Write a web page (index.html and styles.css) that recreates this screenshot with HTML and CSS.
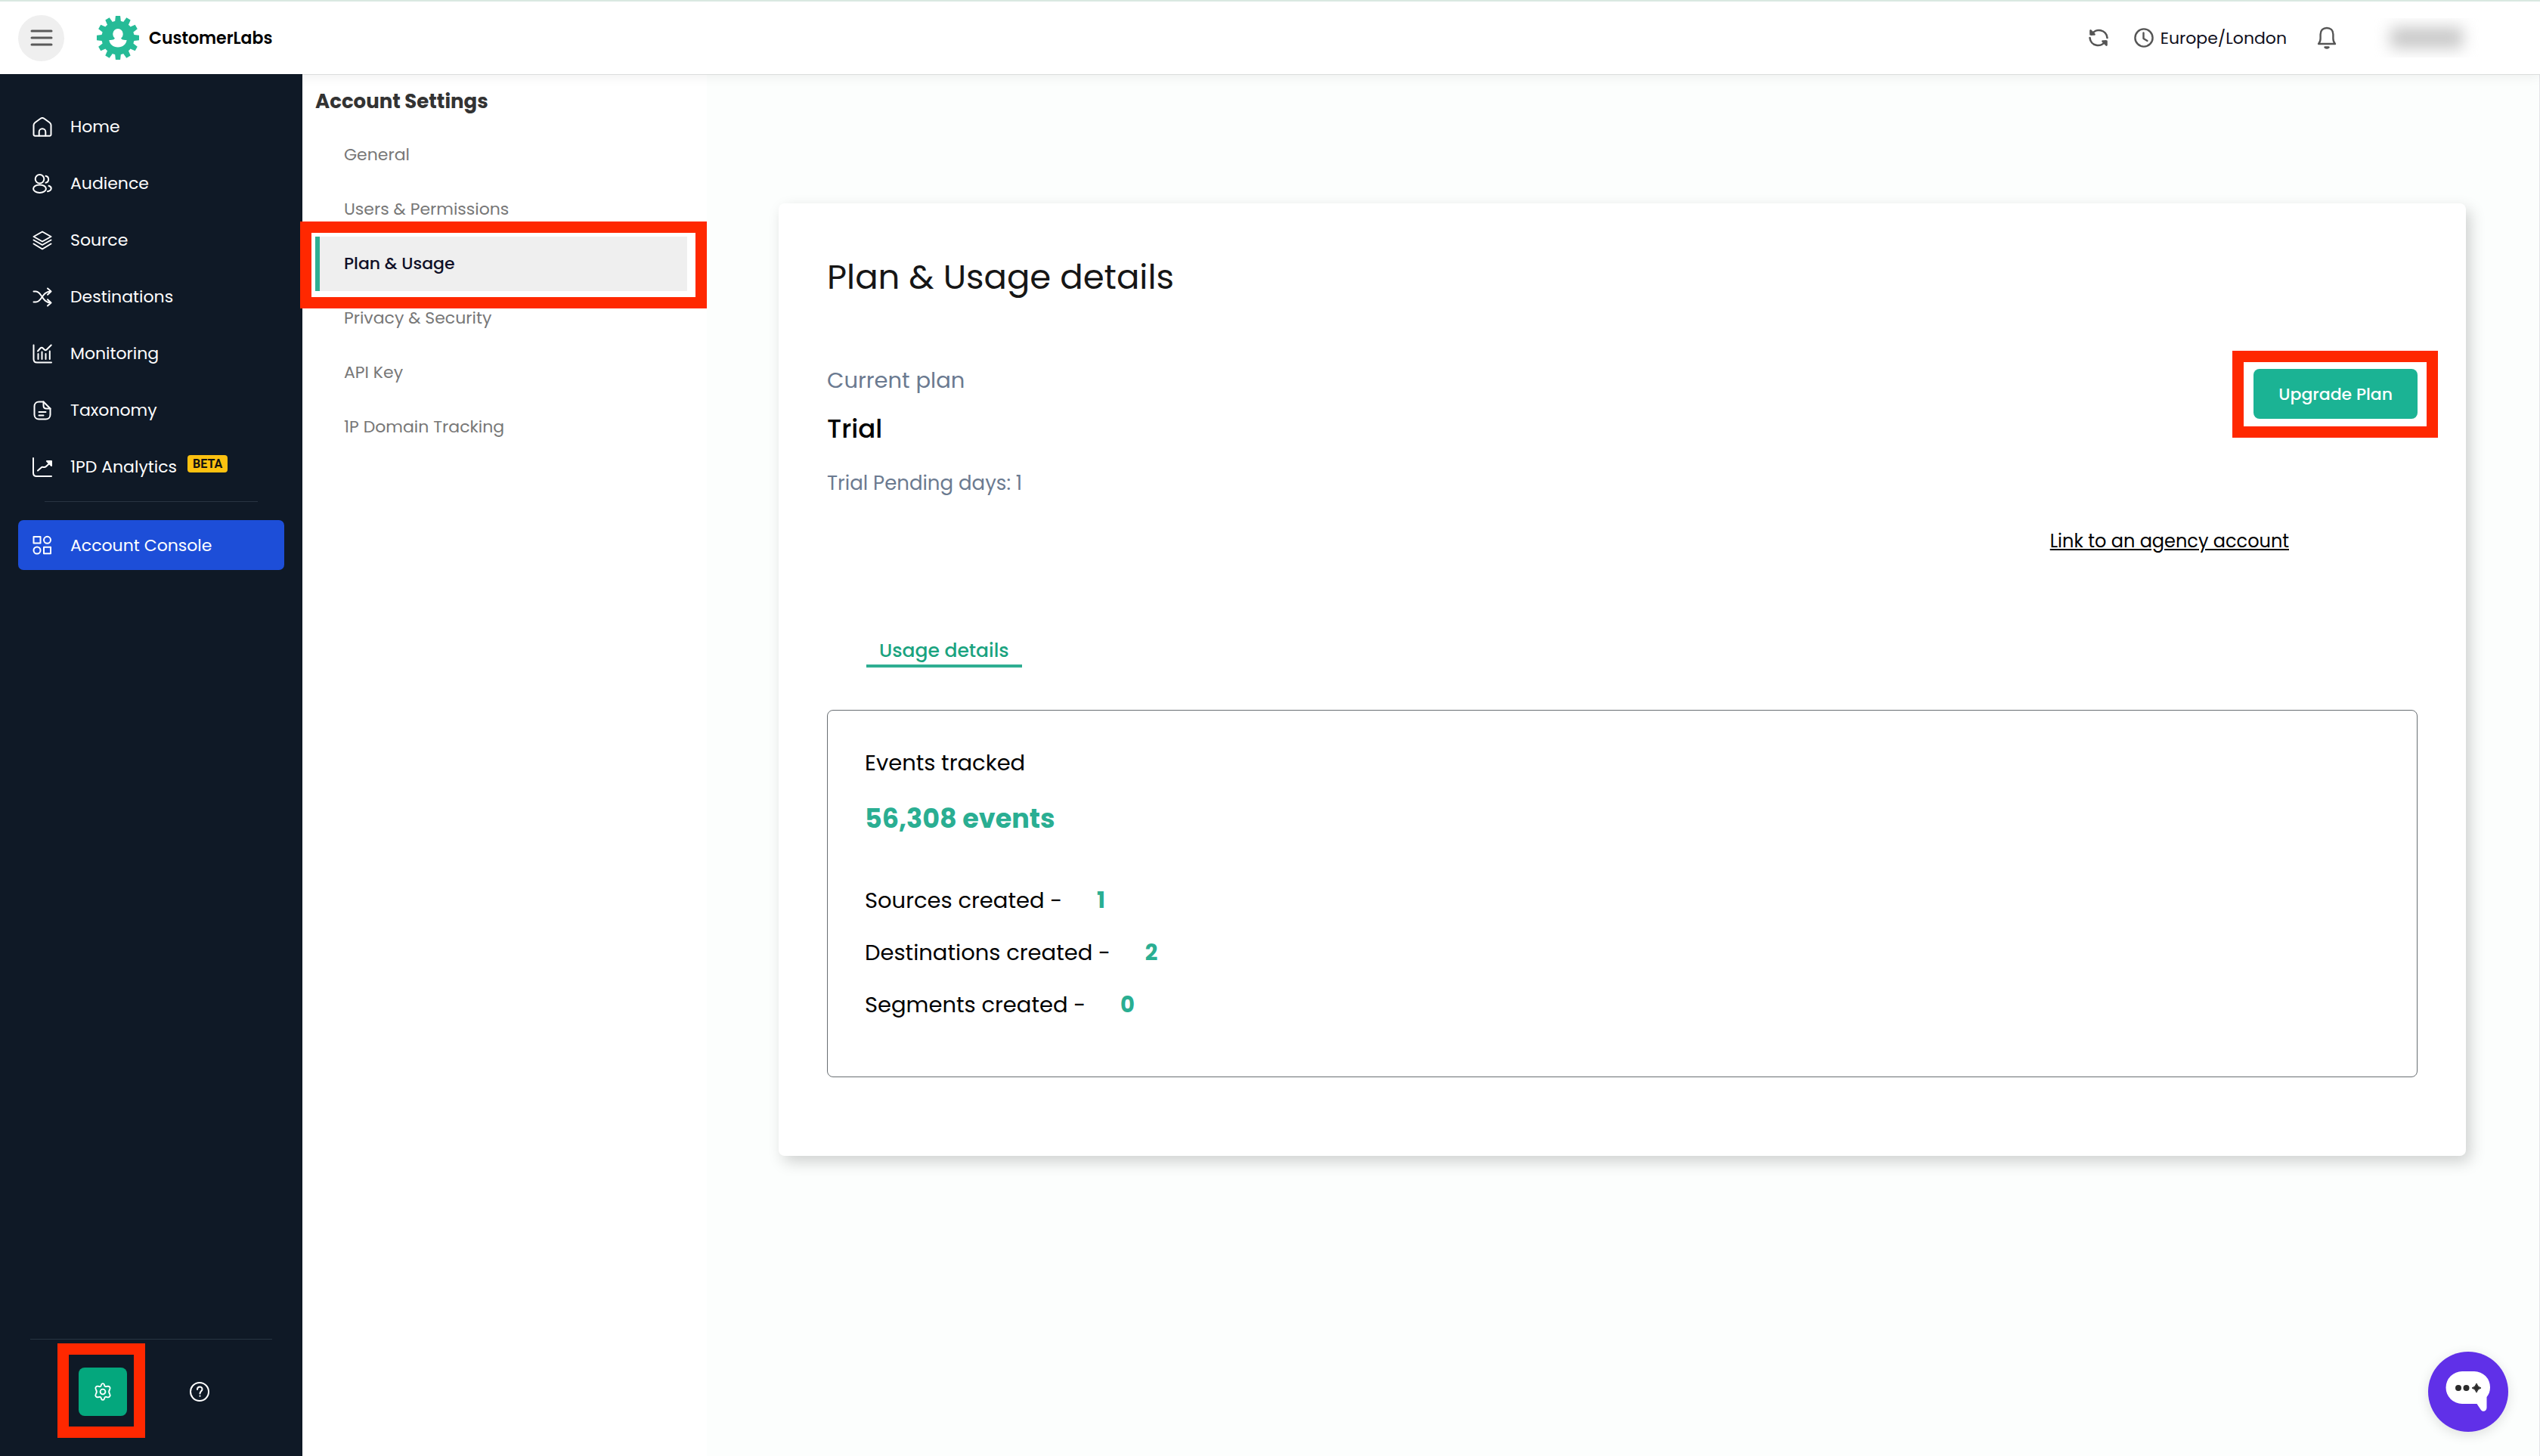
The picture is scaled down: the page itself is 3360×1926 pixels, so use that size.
FILE: index.html
```html
<!DOCTYPE html>
<html lang="en">
<head>
    <meta charset="UTF-8">
    <meta name="viewport" content="width=device-width, initial-scale=1.0">
    <title>Plan &amp; Usage - CustomerLabs</title>
    <link rel="stylesheet" href="styles.css">
</head>
<body>
    <header class="topbar">
        <button class="menu-btn" aria-label="Toggle menu">
            <svg width="30" height="24" viewBox="0 0 30 24" stroke="#5a5a5a" stroke-width="3" stroke-linecap="round">
                <path d="M2 3h26M2 12h26M2 21h26"/>
            </svg>
        </button>
        <a class="brand" href="#">
            <svg width="56" height="58" viewBox="-29 -29 58 58" preserveAspectRatio="none" fill="#26bb97">
                <defs><path id="tooth" d="M-4.200-20L-3.200-29H3.200L4.200-20Z"/></defs>
                <circle r="22.500"/>
                <use href="#tooth"/>
                <use href="#tooth" transform="rotate(30)"/>
                <use href="#tooth" transform="rotate(60)"/>
                <use href="#tooth" transform="rotate(90)"/>
                <use href="#tooth" transform="rotate(120)"/>
                <use href="#tooth" transform="rotate(150)"/>
                <use href="#tooth" transform="rotate(180)"/>
                <use href="#tooth" transform="rotate(210)"/>
                <use href="#tooth" transform="rotate(240)"/>
                <use href="#tooth" transform="rotate(270)"/>
                <use href="#tooth" transform="rotate(300)"/>
                <use href="#tooth" transform="rotate(330)"/>
                <circle cy="-5" r="7" fill="#fff"/>
                <path fill="#fff" d="M-4-1H4C4 2 6 3 12 3C11.500 8.500 6.500 12.500 0 12.500S-11.500 8.500-12 3C-6 3-4 2-4-1Z"/>
            </svg>
            <span>CustomerLabs</span>
        </a>
        <div class="tools">
            <button class="tool" aria-label="Refresh">
                <svg width="26" height="28" viewBox="0 0 26 28" fill="none" stroke="#555" stroke-width="2.600" stroke-linecap="round" stroke-linejoin="round">
                    <path d="M4 9.500A11 11 0 0 1 24.500 14"/>
                    <path d="M22 18.500A11 11 0 0 1 1.500 14"/>
                    <path d="M2.500 4.500v5h5z" fill="#555"/>
                    <path d="M23.500 23.500v-5h-5z" fill="#555"/>
                </svg>
            </button>
            <button class="tool timezone">
                <svg width="26" height="26" viewBox="0 0 26 26" fill="none" stroke="#555" stroke-width="2.400" stroke-linecap="round" stroke-linejoin="round">
                    <circle cx="13" cy="13" r="11.600"/>
                    <path d="M12.500 6.500V14l5 3"/>
                </svg>
                <span>Europe/London</span>
            </button>
            <button class="tool bell" aria-label="Notifications">
                <svg width="26" height="30" viewBox="0 0 26 30" fill="none" stroke="#555" stroke-width="2.400" stroke-linecap="round" stroke-linejoin="round">
                    <path d="M2 23h22c-2-2-2.600-4-2.600-7v-5.500C21.400 5 18 2 13 2S4.600 5 4.600 10.500V16c0 3-.6 5-2.600 7z"/>
                    <path d="M10.500 27.500q2.500 2 5 0z" fill="#555"/>
                </svg>
            </button>
            <button class="account" aria-label="Account"></button>
        </div>
    </header>

    <div class="layout">
        <aside class="sidebar">
            <nav class="side-nav">
                <a href="#">
                    <svg class="icon" viewBox="0 0 26 26"><path d="M1.500 10.500c0-1.500.5-2.300 1.700-3.300L10 2.200c2-1.600 4-1.600 6 0l6.800 5c1.200 1 1.700 1.800 1.700 3.300V23a1.800 1.800 0 0 1-1.800 1.800H3.300A1.800 1.800 0 0 1 1.500 23z"/><path d="M8.700 24.500V19.500a4.300 4.300 0 0 1 8.600 0v5"/></svg>
                    <span>Home</span>
                </a>
                <a href="#">
                    <svg class="icon" viewBox="0 0 26 26"><circle cx="9.500" cy="6.800" r="5.800"/><ellipse cx="9.500" cy="19.700" rx="8.400" ry="5.300"/><path d="M17.500 2.800a4.600 4.600 0 0 1 0 9M21.500 15.800c4.500 1.500 4.500 6-1.500 7.400"/></svg>
                    <span>Audience</span>
                </a>
                <a href="#">
                    <svg class="icon" viewBox="0 0 26 26"><path d="M13 1.500L24.500 8 13 14.500 1.500 8z"/><path d="M1.500 12.500L13 19l11.500-6.500M1.500 17.500L13 24.500l11.500-7"/></svg>
                    <span>Source</span>
                </a>
                <a href="#">
                    <svg class="icon" viewBox="0 0 26 26"><path d="M1.500 5.500h3c8 0 8 15 19.500 15M1.500 19.500h3c8 0 8-14 19.500-14M20 1.500l4.500 4-4.500 4.300M20 16.300l4.500 4.200-4.500 4"/></svg>
                    <span>Destinations</span>
                </a>
                <a href="#">
                    <svg class="icon" viewBox="0 0 26 26"><path d="M1.500 1.500V20c0 3 1.500 4.500 4.500 4.500h19M7.500 13v7M12.500 10.500V20M17.500 13v7M22.800 9.500V20M7 9.500l3.500-4c1-1 2.200-1 3.200 0l2 2c1 1 2 1 3 0l6-6"/></svg>
                    <span>Monitoring</span>
                </a>
                <a href="#">
                    <svg class="icon" viewBox="0 0 26 26"><path d="M14.500 1.500H8.500c-3.500 0-6 2.500-6 6v11c0 3.500 2.500 6 6 6h9c3.500 0 6-2.500 6-6v-8z"/><path d="M14.500 1.500v5c0 2.500 1.500 4 4 4h5M8.500 15h9M8.500 19.500h6"/></svg>
                    <span>Taxonomy</span>
                </a>
                <a href="#">
                    <svg class="icon" viewBox="0 0 26 26"><path d="M1 1v19.500C1 23.500 2.500 25 5.500 25H25M7 17.500l4-3.500c1-1 2-1.500 3.500-1 1.500.3 2.500 0 3.500-1L24 6.500"/><path d="M19 5h6v6z" fill="currentColor"/></svg>
                    <span>1PD Analytics</span>
                    <span class="beta">BETA</span>
                </a>
            </nav>
            <hr class="divider divider-short">
            <a class="console-link" href="#">
                <svg class="icon" viewBox="0 0 26 26"><rect x="1.500" y="2" width="9" height="8.500"/><circle cx="19.500" cy="6.300" r="4.500"/><circle cx="6" cy="20" r="4.500"/><rect x="15" y="15.700" width="9" height="8.500"/></svg>
                <span>Account Console</span>
            </a>
            <div class="side-footer">
                <hr class="divider">
                <div class="footer-actions">
                    <button class="gear-btn highlight" aria-label="Settings">
                        <svg class="icon" viewBox="0 0 26 26"><circle cx="13" cy="13" r="3.700"/><path d="M10.800 3.200c.5-2.600 3.900-2.600 4.400 0 .4 2.300 1.500 3 3.700 2.200 3.200-1.200 5.800 1.700 4 4.300-1.600 2.400-1.600 4.200 0 6.600 1.800 2.600-.8 5.500-4 4.300-2.200-.8-3.300-.1-3.700 2.200-.5 2.600-3.900 2.600-4.400 0-.4-2.300-1.500-3-3.700-2.200-3.200 1.200-5.800-1.700-4-4.300 1.600-2.400 1.600-4.200 0-6.600-1.800-2.600.8-5.500 4-4.300 2.200.8 3.300.1 3.700-2.200z"/></svg>
                    </button>
                    <button class="help-btn" aria-label="Help">
                        <svg class="icon" viewBox="0 0 26 26"><circle cx="13" cy="13" r="12"/><path d="M10 10c0-4.500 6.500-4.500 6.500-.3 0 2.500-3 2.800-3 5.800M13.500 18.600v.2"/></svg>
                    </button>
                </div>
            </div>
        </aside>

        <nav class="settings-nav">
            <h2>Account Settings</h2>
            <a href="#">General</a>
            <a href="#">Users &amp; Permissions</a>
            <a class="active highlight" href="#">Plan &amp; Usage</a>
            <a href="#">Privacy &amp; Security</a>
            <a href="#">API Key</a>
            <a href="#">1P Domain Tracking</a>
        </nav>

        <main class="content">
            <section class="card">
                <h1>Plan &amp; Usage details</h1>
                <div class="plan-row">
                    <div class="plan">
                        <p class="plan-label">Current plan</p>
                        <p class="plan-name">Trial</p>
                        <p class="plan-days">Trial Pending days: 1</p>
                    </div>
                    <button class="upgrade-btn highlight">Upgrade Plan</button>
                </div>
                <div class="agency">
                    <a href="#">Link to an agency account</a>
                </div>
                <button class="tab">Usage details</button>
                <div class="usage">
                    <p class="usage-label">Events tracked</p>
                    <p class="usage-total">56,308 events</p>
                    <p class="usage-line">Sources created - <strong>1</strong></p>
                    <p class="usage-line">Destinations created - <strong>2</strong></p>
                    <p class="usage-line">Segments created - <strong>0</strong></p>
                </div>
            </section>
        </main>
    </div>

    <button class="chat-btn" aria-label="Open chat">
        <svg width="60" height="54" viewBox="0 0 60 54">
            <path fill="#fff" d="M22 0H38A21 21 0 0 1 59 21.500C59 27 57 31 54.500 34V48C54.500 53 49 54.500 46.500 50.500L41.500 43H22A21.500 21.500 0 0 1 22 0Z"/>
            <g fill="#2b2b2b">
                <circle cx="17" cy="22" r="4"/>
                <circle cx="27.500" cy="22" r="4"/>
                <path d="M41 16Q42.200 20.800 47 22Q42.200 23.200 41 28Q39.800 23.200 35 22Q39.800 20.800 41 16Z" stroke="#2b2b2b"/>
            </g>
        </svg>
    </button>
</body>
</html>
```
FILE: styles.css
```css
* {
    box-sizing: border-box;
}
body {
    margin: 0;
    min-height: 100vh;
    display: flex;
    flex-direction: column;
    font-family: Poppins, Inter, sans-serif;
    font-size: 22px;
    background-color: #fcfefd;
    color: #000;
}
h1, h2, p {
    margin: 0;
}
a {
    color: inherit;
    text-decoration: none;
}
button {
    font: inherit;
    border: none;
    padding: 0;
    background: none;
    cursor: pointer;
}
svg {
    display: block;
    flex-shrink: 0;
}

/* Top bar */
.topbar {
    position: relative;
    z-index: 1;
    display: flex;
    align-items: center;
    height: 98px;
    padding: 0 80px 0 24px;
    background-color: #fff;
    border-top: 2px solid #d9e8e1;
    box-shadow: 0 1px 0 #dcdedd, 0 2px 16px rgba(0, 0, 0, 0.08);
}
.menu-btn {
    display: flex;
    align-items: center;
    justify-content: center;
    width: 61px;
    height: 61px;
    border-radius: 50%;
    background-color: #efefef;
}
.brand {
    display: flex;
    align-items: center;
    gap: 13px;
    margin-left: 43px;
    font-weight: 600;
}
.tools {
    display: flex;
    align-items: center;
    margin-left: auto;
}
.timezone {
    display: flex;
    align-items: center;
    gap: 9px;
    margin: 0 40px 0 34px;
    color: #101020;
}
.account {
    width: 140px;
    height: 52px;
    margin-left: 49px;
    padding: 10px 22px;
    overflow: hidden;
}
/* blurred account name */
.account::before {
    content: "";
    display: block;
    height: 28px;
    background-color: #c8c8c8;
    filter: blur(10px);
}

/* Sidebar */
.layout {
    flex: 1;
    display: flex;
}
.sidebar {
    position: relative;
    z-index: 2;
    display: flex;
    flex-direction: column;
    width: 400px;
    padding: 32px 24px 53px;
    background-color: #0f1926;
    color: #fff;
}
.icon {
    width: 26px;
    height: 26px;
    fill: none;
    stroke: currentColor;
    stroke-width: 2;
    stroke-linecap: round;
    stroke-linejoin: round;
}
.side-nav a,
.console-link {
    display: flex;
    align-items: center;
    gap: 24px;
    height: 75px;
    padding: 0 19px;
}
.beta {
    height: 23px;
    margin: 0 0 8px -10px;
    padding: 0 7px;
    border-radius: 4px;
    background-color: #fcc110;
    color: #111;
    font-family: Roboto, sans-serif;
    font-size: 16px;
    font-weight: 700;
    line-height: 23px;
}
.divider {
    width: 100%;
    height: 1px;
    margin: 0;
    border: none;
    background-color: #283442;
}
.divider-short {
    width: 282px;
    margin: 8px auto 24px;
}
.console-link {
    height: 66px;
    border-radius: 7px;
    background-color: #1d4ed8;
}
.side-footer {
    margin-top: auto;
    padding: 0 16px;
}
.footer-actions {
    display: flex;
    align-items: center;
    gap: 83px;
    padding: 37px 64px 0;
}
.gear-btn,
.help-btn {
    color: #fff;
}
.gear-btn {
    display: flex;
    align-items: center;
    justify-content: center;
    width: 64px;
    height: 64px;
    border-radius: 8px;
    background-color: #04a77d;
}
.gear-btn .icon {
    width: 24px;
    height: 24px;
}

/* Red call-out frames */
.highlight {
    position: relative;
}
.highlight::after {
    content: "";
    position: absolute;
    z-index: 3;
    inset: -24px -27px -25px -28px;
    border: 15px solid #ff2800;
}
.gear-btn::after {
    inset: -32px -24px -29px -28px;
}
.settings-nav .highlight {
    z-index: 3;
}
.settings-nav .highlight::after {
    inset: -20px -26px -23px -26px;
}

/* Settings menu */
.settings-nav {
    width: 535px;
    padding: 18px 26px 0 17px;
    background-color: #fff;
}
.settings-nav h2 {
    margin-bottom: 17px;
    color: #333;
    font-size: 26px;
    font-weight: 700;
    line-height: 36px;
}
.settings-nav a {
    display: block;
    padding-left: 32px;
    border-left: 6px solid transparent;
    color: #777;
    line-height: 72px;
}
.settings-nav .active {
    border-left-color: #2fae92;
    background-color: #efefef;
    color: #101028;
    font-weight: 500;
}

/* Plan & usage */
.content {
    flex: 1;
    padding: 171px 97px 64px 95px;
    border-right: 1px solid #e4e4e8;
}
.card {
    padding: 66px 64px 104px;
    border-radius: 8px;
    background-color: #fff;
    box-shadow: 6px 8px 20px rgba(0, 0, 0, 0.18);
}
.card h1 {
    margin-bottom: 84px;
    color: #161616;
    font-size: 45px;
    font-weight: 400;
    line-height: 64px;
}
.plan-row {
    display: flex;
    align-items: flex-start;
    justify-content: space-between;
}
.plan p {
    line-height: 40px;
}
.plan-label {
    color: #6b7a90;
    font-size: 29px;
}
.plan .plan-name {
    margin: 24px 0 32px;
    font-size: 34px;
    font-weight: 500;
}
.plan-days {
    color: #6b7a90;
    font-size: 26px;
}
.upgrade-btn {
    height: 66px;
    margin-top: 5px;
    padding: 0 33px;
    border-radius: 8px;
    background-color: #1bb394;
    color: #fff;
    font-weight: 500;
}
.agency {
    margin: 37px 170px 107px 0;
    text-align: right;
    font-size: 24px;
    line-height: 40px;
}
.agency a {
    text-decoration: underline;
}
.tab {
    display: block;
    margin: 0 0 56px 52px;
    padding: 0 17px;
    border-bottom: 4px solid #2fae92;
    color: #1aa37f;
    font-size: 25px;
    font-weight: 500;
    line-height: 36px;
}
.usage {
    padding: 49px 49px 75px;
    border: 1px solid #686e72;
    border-radius: 8px;
    font-size: 29px;
    line-height: 40px;
}
.usage-total {
    margin: 30px 0 64px;
    color: #2aae92;
    font-size: 35px;
    font-weight: 700;
    line-height: 48px;
}
.usage-line + .usage-line {
    margin-top: 29px;
}
.usage-line strong {
    margin-left: 38px;
    color: #2aae92;
    font-weight: 700;
}

/* Chat launcher */
.chat-btn {
    position: fixed;
    right: 42px;
    bottom: 32px;
    display: flex;
    align-items: center;
    justify-content: center;
    width: 106px;
    height: 106px;
    border-radius: 50%;
    background-color: #6030e8;
    box-shadow: 0 4px 16px rgba(0, 0, 0, 0.12);
}
```
